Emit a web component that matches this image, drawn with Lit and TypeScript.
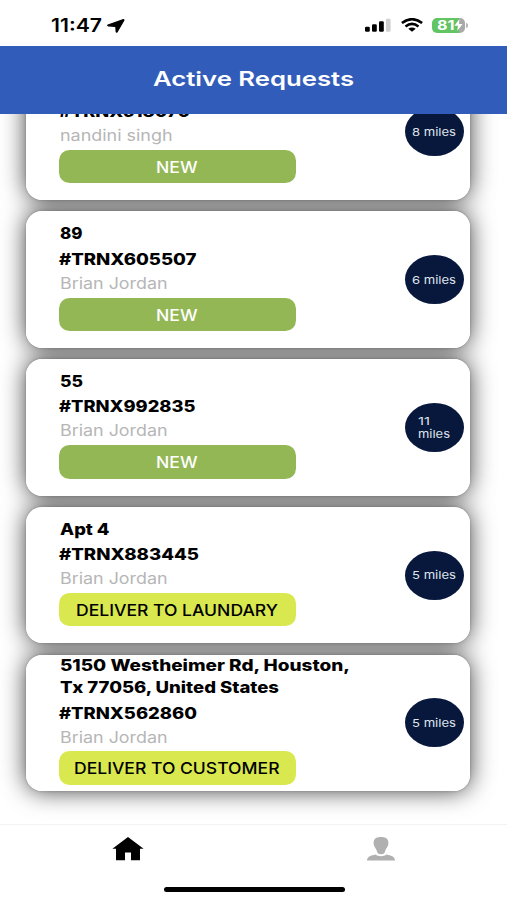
import { LitElement, html, svg, css } from "lit";
import { customElement, property } from "lit/decorators.js";

/** One line of text set to an exact width; `base` is the baseline inside a box of height `h`. */
@customElement("fit-text")
class FitText extends LitElement {
  @property() text = "";
  @property({ type: Number }) w = 100;
  @property({ type: Number }) h = 24;
  @property({ type: Number }) base = 18;
  static styles = css`
    :host { display: block; line-height: 0; }
    svg { display: block; overflow: visible; }
    text { fill: currentColor; }
  `;
  render() {
    return html`<svg width=${this.w} height=${this.h}>${svg`<text x="0" y=${this.base} textLength=${this.w} lengthAdjust="spacingAndGlyphs">${this.text}</text>`}</svg>`;
  }
}

type Line = [string, number];
interface Job {
  address: Line[];
  id: Line;
  name: Line;
  status: Line;
  tone: "new" | "deliver";
  miles: Line[];
}

const brian: Line = ["Brian Jordan", 107.5];
const fresh: Line = ["NEW", 41.5];
const jobs: Job[] = [
  { address: [["21", 20]], id: ["#TRNX618070", 131], name: ["nandini singh", 112.5], status: fresh, tone: "new", miles: [["8 miles", 44]] },
  { address: [["89", 22.5]], id: ["#TRNX605507", 137.5], name: brian, status: fresh, tone: "new", miles: [["6 miles", 44]] },
  { address: [["55", 23]], id: ["#TRNX992835", 136.5], name: brian, status: fresh, tone: "new", miles: [["11", 12], ["miles", 32]] },
  { address: [["Apt 4", 49.5]], id: ["#TRNX883445", 140], name: brian, status: ["DELIVER TO LAUNDARY", 202], tone: "deliver", miles: [["5 miles", 44]] },
  { address: [["5150 Westheimer Rd, Houston,", 290], ["Tx 77056, United States", 219]], id: ["#TRNX562860", 138], name: brian, status: ["DELIVER TO CUSTOMER", 205.5], tone: "deliver", miles: [["5 miles", 44]] },
];

@customElement("app-root")
class AppRoot extends LitElement {
  static styles = css`
    :host {
      display: flex; flex-direction: column; width: 507px; height: 900px;
      overflow: hidden; background: #fff; color: #000;
      font-family: Inter, "Noto Sans", sans-serif;
    }
    .status { flex: none; height: 46px; box-sizing: border-box; padding: 13px 39px 0 51px; display: flex; align-items: flex-start; }
    .clock { font-size: 18px; font-weight: 600; }
    .arrow { margin: 6px 0 0 5px; }
    .signal { margin: 5px 0 0 auto; }
    .wifi { margin: 5px 0 0 10px; }
    .battery { display: flex; align-items: center; margin: 4.5px 0 0 9px; }
    .cell {
      width: 33.5px; height: 15.6px; border-radius: 5px; box-sizing: border-box;
      background: linear-gradient(90deg, #62c462 0 81%, #a9a9a9 81%);
      color: #fff; font-size: 13px; font-weight: 700; display: flex; align-items: center; padding-left: 5px;
    }
    .nub { width: 2px; height: 5px; margin-left: 1px; border-radius: 0 2px 2px 0; background: #b5b5b5; }
    header {
      flex: none; height: 68.3px; background: #325cba; color: #fff; display: flex; justify-content: center;
      font-size: 20px; font-weight: 600; position: relative; z-index: 1;
    }
    main {
      flex: 1; min-height: 0; overflow: hidden; display: flex; flex-direction: column; justify-content: flex-end;
      gap: 11.3px; padding: 0 37px 32.6px 26px; position: relative; z-index: 0;
    }
    .card {
      flex: none; height: 136.4px; box-sizing: border-box; position: relative; background: #fff; border-radius: 16px;
      display: flex; align-items: center; justify-content: space-between; padding: 0 6px 0 33px;
    }
    .card::before {
      content: ""; position: absolute; inset: 0; z-index: -1; border-radius: 16px;
      box-shadow: 0 0 24px rgba(0, 0, 0, 0.74), 0 0 3px rgba(0, 0, 0, 0.22);
    }
    .info { width: 300px; font-size: 16px; margin-top: -5.2px; }
    .line { font-weight: 780; margin-left: 1px; }
    .id { font-weight: 780; margin-top: 3px; }
    .name { color: #b6b6b6; margin: 2px 0 0 1px; }
    .pill {
      width: 237px; height: 33.4px; margin-top: 2.8px; border-radius: 10.5px; box-sizing: border-box;
      display: flex; justify-content: center; font-weight: 500; padding-right: 1.5px;
    }
    .new { background: #93b755; color: #fff; }
    .deliver { background: #d8e84e; color: #000; }
    .miles {
      width: 59px; height: 49px; border-radius: 50%; background: #07183c; color: #dfe3ea; font-size: 11px;
      display: flex; flex-direction: column; justify-content: center; align-items: center;
    }
    .stack { display: flex; flex-direction: column; align-items: flex-start; padding: 1px 1.5px 0 0; }
    nav {
      flex: none; height: 76.5px; box-sizing: border-box; border-top: 1px solid #f3f3f3; background: #fff;
      display: flex; flex-direction: column; justify-content: space-between; align-items: center; padding-bottom: 8px;
    }
    .tabs { display: grid; grid-template-columns: 1fr 1fr; width: 100%; box-sizing: border-box; justify-items: center; padding: 12.5px 0 0 1px; }
    .homebar { width: 181px; height: 5px; border-radius: 3px; background: #000; margin-left: 1px; }
  `;

  private card(j: Job) {
    return html`<section class="card">
      <div class="info">
        ${j.address.map(([t, w]) => html`<fit-text class="line" .text=${t} .w=${w} .h=${21.6} .base=${16.3}></fit-text>`)}
        <fit-text class="id" .text=${j.id[0]} .w=${j.id[1]} .h=${22} .base=${16.6}></fit-text>
        <fit-text class="name" .text=${j.name[0]} .w=${j.name[1]} .h=${23} .base=${17.2}></fit-text>
        <div class="pill ${j.tone}">
          <fit-text .text=${j.status[0]} .w=${j.status[1]} .h=${33} .base=${22.5}></fit-text>
        </div>
      </div>
      <div class="miles"><div class="stack">
        ${j.miles.map(([t, w]) => html`<fit-text .text=${t} .w=${w} .h=${12.5} .base=${10}></fit-text>`)}
      </div></div>
    </section>`;
  }

  render() {
    return html`
      <div class="status">
        <fit-text class="clock" .text=${"11:47"} .w=${51} .h=${24} .base=${19.4}></fit-text>
        <svg class="arrow" width="18" height="14" viewBox="0 0 18 14"><path d="M15.800.7 1 6q-.7.500.2.800l7.600.7.400 5.300q.3.700 1 0L16.900 1.200q.1-.8-1.100-.5z" fill="#000" stroke="#000" stroke-width="1.200" stroke-linejoin="round"/></svg>
        <svg class="signal" width="26" height="14" viewBox="0 0 26 14">
          <rect x="0" y="8.800" width="4.800" height="5" rx="1.300"/><rect x="7" y="6.200" width="4.800" height="7.600" rx="1.300"/>
          <rect x="14" y="3.300" width="4.800" height="10.500" rx="1.300"/><rect x="21" y="0.800" width="4.600" height="13" rx="1.300" fill="#cfcfcf"/>
        </svg>
        <svg class="wifi" width="22" height="14" viewBox="0 0 22 14" fill="none" stroke="#000" stroke-width="2.600">
          <path d="M.9 5Q11-2.600 21.100 5"/><path d="M4.500 8.500Q11 3.400 17.500 8.500"/><path d="M11 13.700 7.300 10.800Q11 8.200 14.700 10.800z" fill="#000" stroke="none"/>
        </svg>
        <div class="battery">
          <div class="cell">
            <fit-text .text=${"81"} .w=${17.5} .h=${16} .base=${12.8}></fit-text>
            <svg width="9" height="12" viewBox="0 0 9 12"><path d="M5.400 0 .4 6.800H4L3.200 12 8.600 5H5z" fill="#fff"/></svg>
          </div>
          <div class="nub"></div>
        </div>
      </div>
      <header><fit-text .text=${"Active Requests"} .w=${201} .h=${60} .base=${40.3}></fit-text></header>
      <main>${jobs.map((j) => this.card(j))}</main>
      <nav>
        <div class="tabs">
          <svg width="32" height="24" viewBox="0 0 32 24"><path d="M16 0 31.600 11.800H28V23.300H19V15.500H13V23.300H4V11.800H.4z" fill="#000"/></svg>
          <svg width="28" height="24" viewBox="0 0 28 24" fill="#b0b0b0"><path d="M14 0C19 0 21.600 2 21.400 6.500 21.300 9.500 19.500 10.500 18.300 13.500 17.800 16.200 16.500 17.300 14 17.300S10.200 16.200 9.700 13.500C8.500 10.500 6.700 9.500 6.600 6.500 6.400 2 9 0 14 0zM0 23.500C.3 19.500 4 18.600 8.500 17.600 11 19.700 17 19.700 19.500 17.600 24 18.600 27.700 19.500 28 23.500z"/></svg>
        </div>
        <div class="homebar"></div>
      </nav>
    `;
  }
}
